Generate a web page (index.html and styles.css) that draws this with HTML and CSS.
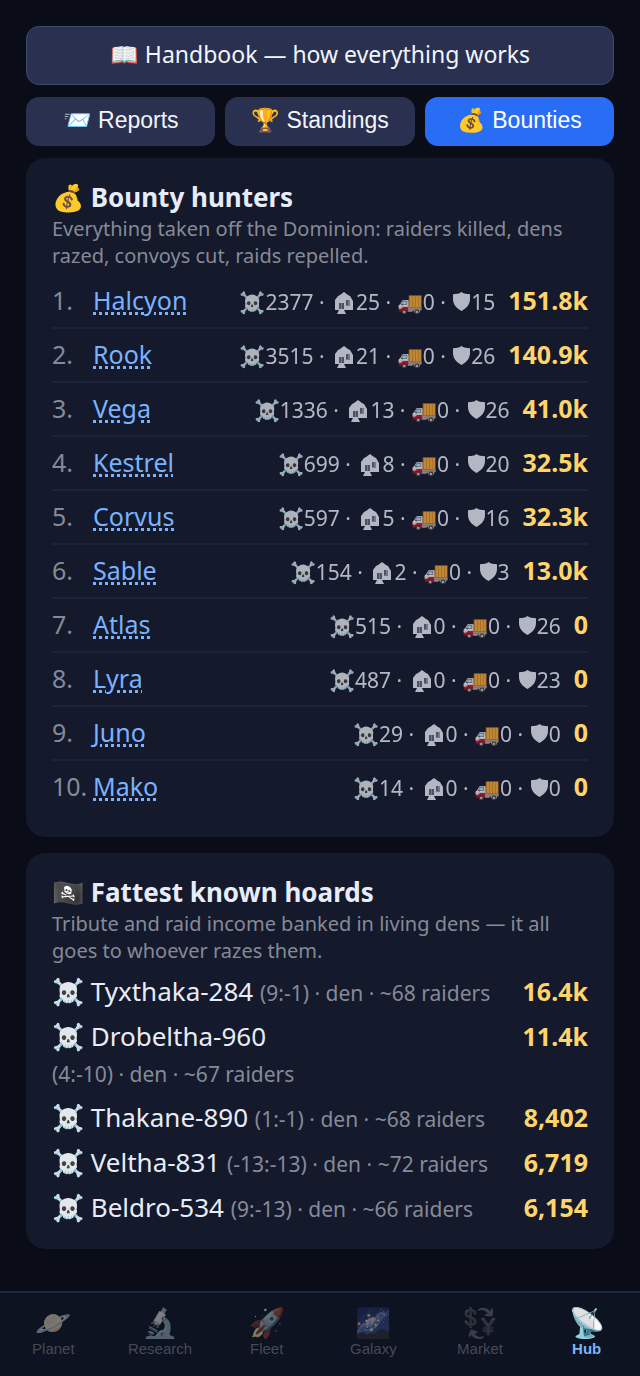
FILE: index.html
```
<!DOCTYPE html>
<html lang="en">
<head>
<meta charset="UTF-8" />
<meta name="viewport" content="width=device-width, initial-scale=1" />
<title>Hub - Bounties</title>
<link rel="stylesheet" href="styles.css">
</head>
<body>

<main>
  <button type="button" class="handbook">📖 Handbook — how everything works</button>

  <div class="tabs">
    <button type="button">📨 Reports</button>
    <button type="button">🏆 Standings</button>
    <button type="button" class="on">💰 Bounties</button>
  </div>

  <section class="card">
    <h2>💰 Bounty hunters</h2>
    <p class="dim">Everything taken off the Dominion: raiders killed, dens razed, convoys cut, raids repelled.</p>
    <div class="rows" id="hunterRows"></div>
  </section>

  <section class="card">
    <h2>🏴‍☠️ Fattest known hoards</h2>
    <p class="dim">Tribute and raid income banked in living dens — it all goes to whoever razes them.</p>
    <div id="hoardRows"></div>
  </section>
</main>

<nav>
  <button type="button"><span class="ico">🪐</span>Planet</button>
  <button type="button"><span class="ico">🔬</span>Research</button>
  <button type="button"><span class="ico">🚀</span>Fleet</button>
  <button type="button"><span class="ico">🌌</span>Galaxy</button>
  <button type="button"><span class="ico mono">💱</span>Market</button>
  <button type="button" class="on"><span class="ico">📡</span>Hub</button>
</nav>

<script>
  const house = `<svg class="house" viewBox="0 0 18 22" aria-hidden="true">
    <path fill="currentColor" d="M9 0l4 3 2 1 3 5v9H9l2 4H2l2-4H0V8l3-4 2-1z"/>
    <path class="cut" d="M4 12h5M4 14h5M4 16h5M5 11v6M8 11v6M11 9h4M11 11h4M11 13h4M12 8v5"/>
  </svg>`;
  const shield = `<svg class="shield" viewBox="0 0 34 38" aria-hidden="true">
    <path fill="currentColor" d="M17 0C12 4 6 4 2 4Q0 4 0 6v8c0 10 6 18 17 24 11-6 17-14 17-24V6q0-2-2-2c-4 0-10 0-15-4z"/>
  </svg>`;

  // name, kills, dens, convoys, raids repelled, bounty
  const hunters = [
    ['Halcyon', 2377, 25, 0, 15, '151.8k'],
    ['Rook', 3515, 21, 0, 26, '140.9k'],
    ['Vega', 1336, 13, 0, 26, '41.0k'],
    ['Kestrel', 699, 8, 0, 20, '32.5k'],
    ['Corvus', 597, 5, 0, 16, '32.3k'],
    ['Sable', 154, 2, 0, 3, '13.0k'],
    ['Atlas', 515, 0, 0, 26, '0'],
    ['Lyra', 487, 0, 0, 23, '0'],
    ['Juno', 29, 0, 0, 0, '0'],
    ['Mako', 14, 0, 0, 0, '0']
  ];
  document.getElementById('hunterRows').innerHTML = hunters.map((h, i) => `
    <div class="row">
      <span class="rank">${i + 1}.</span>
      <a href="#">${h[0]}</a>
      <span class="stats">☠️${h[1]} · ${house}${h[2]} · 🚚${h[3]} · ${shield}${h[4]}</span>
      <b>${h[5]}</b>
    </div>`).join('');

  const hoards = [
    ['Tyxthaka-284', '9:-1', 68, '16.4k'],
    ['Drobeltha-960', '4:-10', 67, '11.4k'],
    ['Thakane-890', '1:-1', 68, '8,402'],
    ['Veltha-831', '-13:-13', 72, '6,719'],
    ['Beldro-534', '9:-13', 66, '6,154']
  ];
  document.getElementById('hoardRows').innerHTML = hoards.map(d => `
    <div class="hoard">
      <span>☠️ ${d[0]} <small>(${d[1]}) · den · ~${d[2]} raiders</small></span>
      <b>${d[3]}</b>
    </div>`).join('');
</script>

</body>
</html>
```
FILE: styles.css
```
* {
  box-sizing: border-box;
}
body {
  margin: 0;
  min-height: 100vh;
  display: flex;
  flex-direction: column;
  background: #0a0c17;
  color: #e8ecf8;
  font: 26px/36px "Noto Sans", sans-serif;
}
button {
  border: 0;
  cursor: pointer;
}
main {
  flex: 1;
  padding: 26px 26px 40px;
}
.handbook {
  display: block;
  width: 100%;
  height: 59px;
  padding: 0 0 4px;
  border: 1px solid #3c4a6e;
  border-radius: 13px;
  background: #2a304f;
  color: #f2f5fc;
  font: 23px "Noto Sans", sans-serif;
}
.tabs {
  display: flex;
  gap: 10px;
  margin: 12px 0;
}
.tabs button {
  flex: 1;
  height: 49px;
  padding: 0 0 2px;
  border-radius: 13px;
  background: #2a304f;
  color: #f2f5fc;
  font: 23px "Liberation Sans", sans-serif;
}
.tabs .on {
  background: #2a6df5;
  color: #fff;
}
.card {
  padding: 21px 26px 24px;
  margin-bottom: 16px;
  border-radius: 19px;
  background: #14192b;
}
.card:last-child {
  margin-bottom: 0;
}
h2 {
  margin: 0;
  font-size: 26px;
  line-height: 36px;
}
p {
  margin: 0;
  font-size: 20px;
  line-height: 27px;
}
.dim, .rank, small {
  color: #868a97;
}
.rows {
  padding-top: 6px;
}
.row {
  display: flex;
  align-items: baseline;
  padding: 8px 0 9px;
  border-bottom: 2px solid #1a223c;
  font-size: 25px;
  line-height: 35px;
}
.row:last-child {
  border-bottom: 0;
}
.rank {
  width: 41px;
}
a {
  color: #79b2ff;
  text-decoration: underline dotted 3px;
  text-underline-offset: 2px;
}
.stats {
  margin-left: auto;
  font-size: 21px;
  line-height: 24px;
  opacity: .75;
}
.house {
  width: 18px;
  height: 22px;
  margin: 0 3px 0 5px;
  vertical-align: -4px;
}
.house .cut {
  fill: none;
  stroke: #14192b;
  stroke-width: .8;
}
.shield {
  width: 17px;
  height: 19px;
  margin: 0 1px 0 2px;
  vertical-align: -1px;
}
b {
  margin-left: 13px;
  color: #ffd56b;
  font-size: 25px;
}
.hoard {
  display: flex;
  justify-content: space-between;
  padding-top: 9px;
}
small {
  display: inline-block;
  font-size: 21px;
  line-height: 24px;
}
nav {
  display: flex;
  height: 85px;
  border-top: 2px solid #1e2744;
  background: #0d1320;
}
nav button {
  flex: 1;
  padding: 0 0 8px;
  background: none;
  color: #464a57;
  font: 15px/16px "Liberation Sans", sans-serif;
}
nav .ico {
  display: block;
  font-size: 29px;
  line-height: 36px;
  opacity: .5;
  filter: grayscale(.4);
}
nav .mono {
  opacity: .4;
  filter: grayscale(1);
}
nav .on {
  color: #79b2ff;
  font-weight: bold;
}
nav .on .ico {
  opacity: 1;
  filter: none;
}
```
